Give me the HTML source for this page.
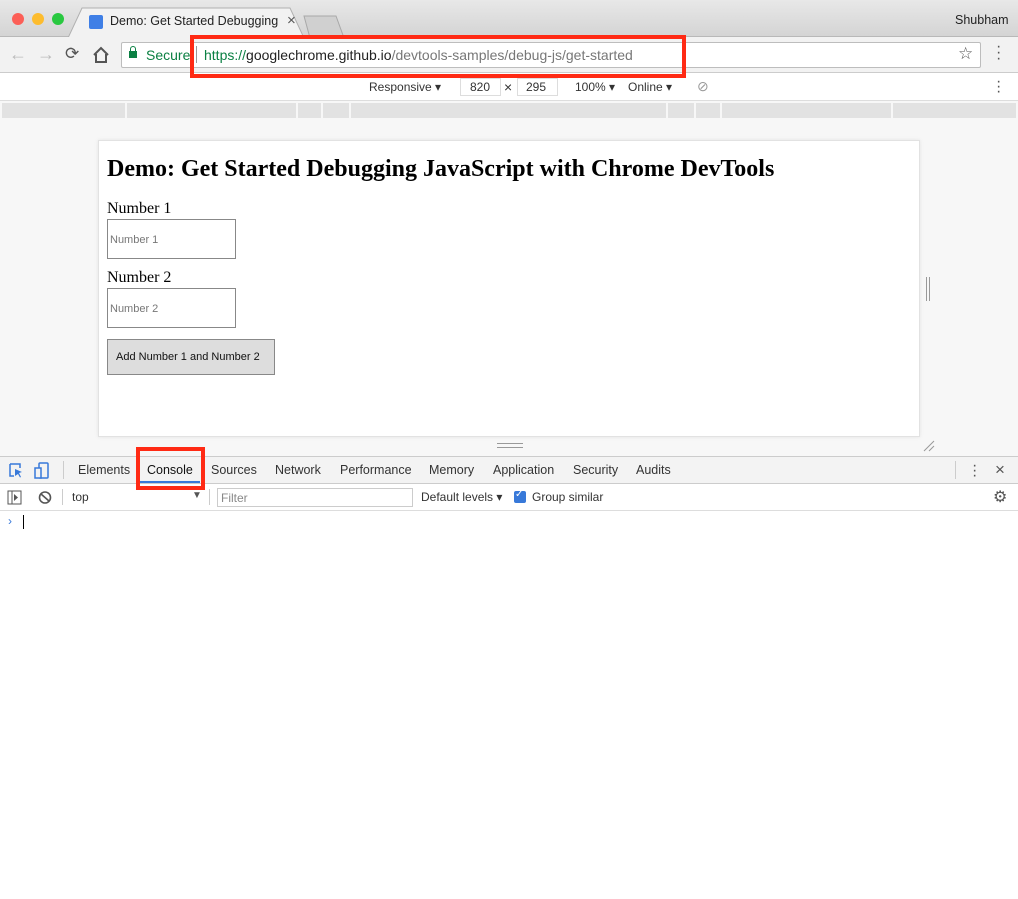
<!DOCTYPE html>
<html><head><meta charset="utf-8"><style>
*{box-sizing:border-box;margin:0;padding:0}
body{width:1018px;height:899px;position:relative;background:#fff;font-family:"Liberation Sans",sans-serif;overflow:hidden}
.a{position:absolute}
.t{font-size:12.5px;color:#333;white-space:nowrap}
</style></head><body>
<div class="a" style="left:0;top:0;width:1018px;height:37px;background:linear-gradient(#e8e8e8,#d4d4d4);border-bottom:1px solid #b8b8b8"></div>
<div class="a" style="left:12px;top:13px;width:12px;height:12px;border-radius:50%;background:#fc5f57"></div>
<div class="a" style="left:32px;top:13px;width:12px;height:12px;border-radius:50%;background:#fdbc2e"></div>
<div class="a" style="left:52px;top:13px;width:12px;height:12px;border-radius:50%;background:#29c840"></div>
<svg class="a" style="left:68px;top:6px" width="280" height="32"><path d="M0 32 L14 2 L222 2 L236 32 Z" fill="#f2f2f2" stroke="#b0b0b0"/><path d="M242 32 L236 10 L268 10 L276 32 Z" fill="#d0d0d0" stroke="#a8a8a8"/></svg>
<div class="a" style="left:89px;top:15px;width:14px;height:14px;background:#3f7fe6;border-radius:2px"></div>
<div class="a t" style="left:110px;top:14px;font-size:12.5px;color:#222;width:170px;overflow:hidden">Demo: Get Started Debugging</div>
<div class="a t" style="left:287px;top:12px;font-size:15px;color:#555">×</div>
<div class="a t" style="left:955px;top:13px;color:#222">Shubham</div>
<div class="a" style="left:0;top:37px;width:1018px;height:36px;background:#f2f2f2;border-bottom:1px solid #ccc"></div>
<div class="a t" style="left:9px;top:44px;font-size:18px;color:#bbb">←</div>
<div class="a t" style="left:37px;top:44px;font-size:18px;color:#bbb">→</div>
<div class="a t" style="left:65px;top:44px;font-size:17px;color:#555">⟳</div>
<svg class="a" style="left:92px;top:46px" width="18" height="18"><path d="M2 9 L9 2 L16 9 M4 8 V16 H14 V8" fill="none" stroke="#555" stroke-width="2"/></svg>
<div class="a" style="left:121px;top:42px;width:860px;height:26px;background:#fff;border:1px solid #bdbdbd;border-radius:2px"></div>
<div class="a" style="left:129px;top:51px;width:8px;height:7px;background:#0b8043"></div>
<div class="a" style="left:130px;top:46px;width:6px;height:7px;border:1.5px solid #0b8043;border-bottom:none;border-radius:3px 3px 0 0"></div>
<div class="a t" style="left:146px;top:47px;font-size:14px;color:#0b8043">Secure</div>
<div class="a" style="left:196px;top:46px;width:1px;height:17px;background:#999"></div>
<div class="a t" style="left:204px;top:47px;font-size:14px;color:#777"><span style="color:#0b8043">https://</span><span style="color:#222">googlechrome.github.io</span>/devtools-samples/debug-js/get-started</div>
<div class="a t" style="left:958px;top:44px;font-size:17px;color:#555">☆</div>
<div class="a t" style="left:996px;top:44px;font-size:16px;color:#555;line-height:6px">·<br>·<br>·</div>
<div class="a" style="left:0;top:74px;width:1018px;height:27px;background:#fff;border-bottom:1px solid #ddd"></div>
<div class="a t" style="left:369px;top:80px;font-size:12px">Responsive ▾</div>
<div class="a" style="left:460px;top:78px;width:41px;height:18px;border:1px solid #ddd"></div>
<div class="a t" style="left:470px;top:80px;font-size:12px">820</div>
<div class="a t" style="left:504px;top:79px;font-size:14px">×</div>
<div class="a" style="left:517px;top:78px;width:41px;height:18px;border:1px solid #ddd"></div>
<div class="a t" style="left:526px;top:80px;font-size:12px">295</div>
<div class="a t" style="left:575px;top:80px;font-size:12px">100% ▾</div>
<div class="a t" style="left:628px;top:80px;font-size:12px">Online ▾</div>
<div class="a t" style="left:697px;top:78px;font-size:14px;color:#999">⊘</div>
<div class="a t" style="left:996px;top:79px;font-size:16px;color:#555;line-height:5px">·<br>·<br>·</div>
<div class="a" style="left:0;top:101px;width:1018px;height:355px;background:#f7f7f7"></div>
<div class="a" style="left:2px;top:103px;width:1014px;height:15px;background:#e2e2e2"></div>
<div class="a" style="left:125px;top:103px;width:2px;height:15px;background:#f7f7f7"></div>
<div class="a" style="left:296px;top:103px;width:2px;height:15px;background:#f7f7f7"></div>
<div class="a" style="left:321px;top:103px;width:2px;height:15px;background:#f7f7f7"></div>
<div class="a" style="left:349px;top:103px;width:2px;height:15px;background:#f7f7f7"></div>
<div class="a" style="left:666px;top:103px;width:2px;height:15px;background:#f7f7f7"></div>
<div class="a" style="left:694px;top:103px;width:2px;height:15px;background:#f7f7f7"></div>
<div class="a" style="left:720px;top:103px;width:2px;height:15px;background:#f7f7f7"></div>
<div class="a" style="left:891px;top:103px;width:2px;height:15px;background:#f7f7f7"></div>
<div class="a" style="left:98px;top:140px;width:822px;height:297px;background:#fff;border:1px solid #e2e2e2;box-shadow:0 0 4px rgba(0,0,0,.08)"></div>
<div class="a" style="left:107px;top:156px;font-family:'Liberation Serif',serif;font-weight:bold;font-size:24px;white-space:nowrap">Demo: Get Started Debugging JavaScript with Chrome DevTools</div>
<div class="a" style="left:107px;top:200px;font-family:'Liberation Serif',serif;font-size:16px">Number 1</div>
<div class="a" style="left:107px;top:219px;width:129px;height:40px;border:1px solid #888"></div>
<div class="a t" style="left:110px;top:234px;font-size:11px;color:#777">Number 1</div>
<div class="a" style="left:107px;top:269px;font-family:'Liberation Serif',serif;font-size:16px">Number 2</div>
<div class="a" style="left:107px;top:288px;width:129px;height:40px;border:1px solid #888"></div>
<div class="a t" style="left:110px;top:303px;font-size:11px;color:#777">Number 2</div>
<div class="a" style="left:107px;top:339px;width:168px;height:36px;border:1px solid #888;background:#ddd"></div>
<div class="a t" style="left:116px;top:351px;font-size:11px;color:#111">Add Number 1 and Number 2</div>
<div class="a" style="left:926px;top:277px;width:4px;height:24px;border-left:1px solid #999;border-right:1px solid #999"></div>
<div class="a" style="left:497px;top:443px;width:26px;height:5px;border-top:1px solid #999;border-bottom:1px solid #999"></div>
<svg class="a" style="left:922px;top:439px" width="14" height="14"><path d="M2 12 L12 2 M7 12 L12 7" stroke="#999"/></svg>
<div class="a" style="left:0;top:456px;width:1018px;height:28px;background:#f3f3f3;border-top:1px solid #ccc;border-bottom:1px solid #ccc"></div>
<svg class="a" style="left:8px;top:462px" width="46" height="18"><path d="M2 2 H12 V6 M2 2 V14 H6" fill="none" stroke="#3879d9" stroke-width="1.5"/><path d="M7 7 L14 10 L11 11 L13 15 L12 15.5 L10 12 L7 14 Z" fill="#3879d9"/><rect x="31" y="1" width="9" height="15" rx="1" fill="none" stroke="#3879d9" stroke-width="1.5"/><rect x="27" y="6" width="6" height="10" fill="#f3f3f3" stroke="#3879d9" stroke-width="1.5"/></svg>
<div class="a" style="left:63px;top:461px;width:1px;height:18px;background:#ccc"></div>
<div class="a t" style="left:78px;top:463px">Elements</div>
<div class="a t" style="left:147px;top:463px;color:#111">Console</div>
<div class="a" style="left:140px;top:481px;width:60px;height:2px;background:#3879d9"></div>
<div class="a t" style="left:211px;top:463px">Sources</div>
<div class="a t" style="left:275px;top:463px">Network</div>
<div class="a t" style="left:340px;top:463px">Performance</div>
<div class="a t" style="left:429px;top:463px">Memory</div>
<div class="a t" style="left:493px;top:463px">Application</div>
<div class="a t" style="left:573px;top:463px">Security</div>
<div class="a t" style="left:636px;top:463px">Audits</div>
<div class="a" style="left:955px;top:461px;width:1px;height:18px;background:#ccc"></div>
<div class="a t" style="left:972px;top:463px;font-size:16px;color:#555;line-height:5px">·<br>·<br>·</div>
<div class="a t" style="left:995px;top:460px;font-size:17px;color:#555">×</div>
<div class="a" style="left:0;top:485px;width:1018px;height:26px;background:#fff;border-bottom:1px solid #ddd"></div>
<svg class="a" style="left:7px;top:490px" width="48" height="16"><rect x="1" y="1" width="13" height="13" fill="none" stroke="#555"/><path d="M5 1 V14" stroke="#555"/><path d="M7 4 L11 7.5 L7 11 Z" fill="#555"/><circle cx="38" cy="7.5" r="5.5" fill="none" stroke="#555" stroke-width="1.6"/><path d="M34 4 L42 11" stroke="#555" stroke-width="1.6"/></svg>
<div class="a" style="left:62px;top:489px;width:1px;height:16px;background:#ccc"></div>
<div class="a t" style="left:72px;top:490px;font-size:12px">top</div>
<div class="a t" style="left:192px;top:490px;font-size:10px;color:#555">▼</div>
<div class="a" style="left:209px;top:489px;width:1px;height:16px;background:#ccc"></div>
<div class="a" style="left:217px;top:488px;width:196px;height:19px;border:1px solid #ccc"></div>
<div class="a t" style="left:221px;top:491px;font-size:12px;color:#888">Filter</div>
<div class="a t" style="left:421px;top:490px;font-size:12px">Default levels ▾</div>
<div class="a" style="left:514px;top:491px;width:12px;height:12px;background:#3879d9;border-radius:2px"></div>
<div class="a t" style="left:515px;top:489px;font-size:10px;color:#fff">✓</div>
<div class="a t" style="left:532px;top:490px;font-size:12px">Group similar</div>
<div class="a t" style="left:993px;top:487px;font-size:16px;color:#555">⚙</div>
<div class="a t" style="left:8px;top:514px;font-size:12px;color:#3879d9">›</div>
<div class="a" style="left:23px;top:515px;width:1px;height:14px;background:#000"></div>
<div class="a" style="left:190px;top:35px;width:496px;height:43px;border:4px solid #ff2a14"></div>
<div class="a" style="left:136px;top:447px;width:69px;height:43px;border:4px solid #ff2a14"></div>
</body></html>
